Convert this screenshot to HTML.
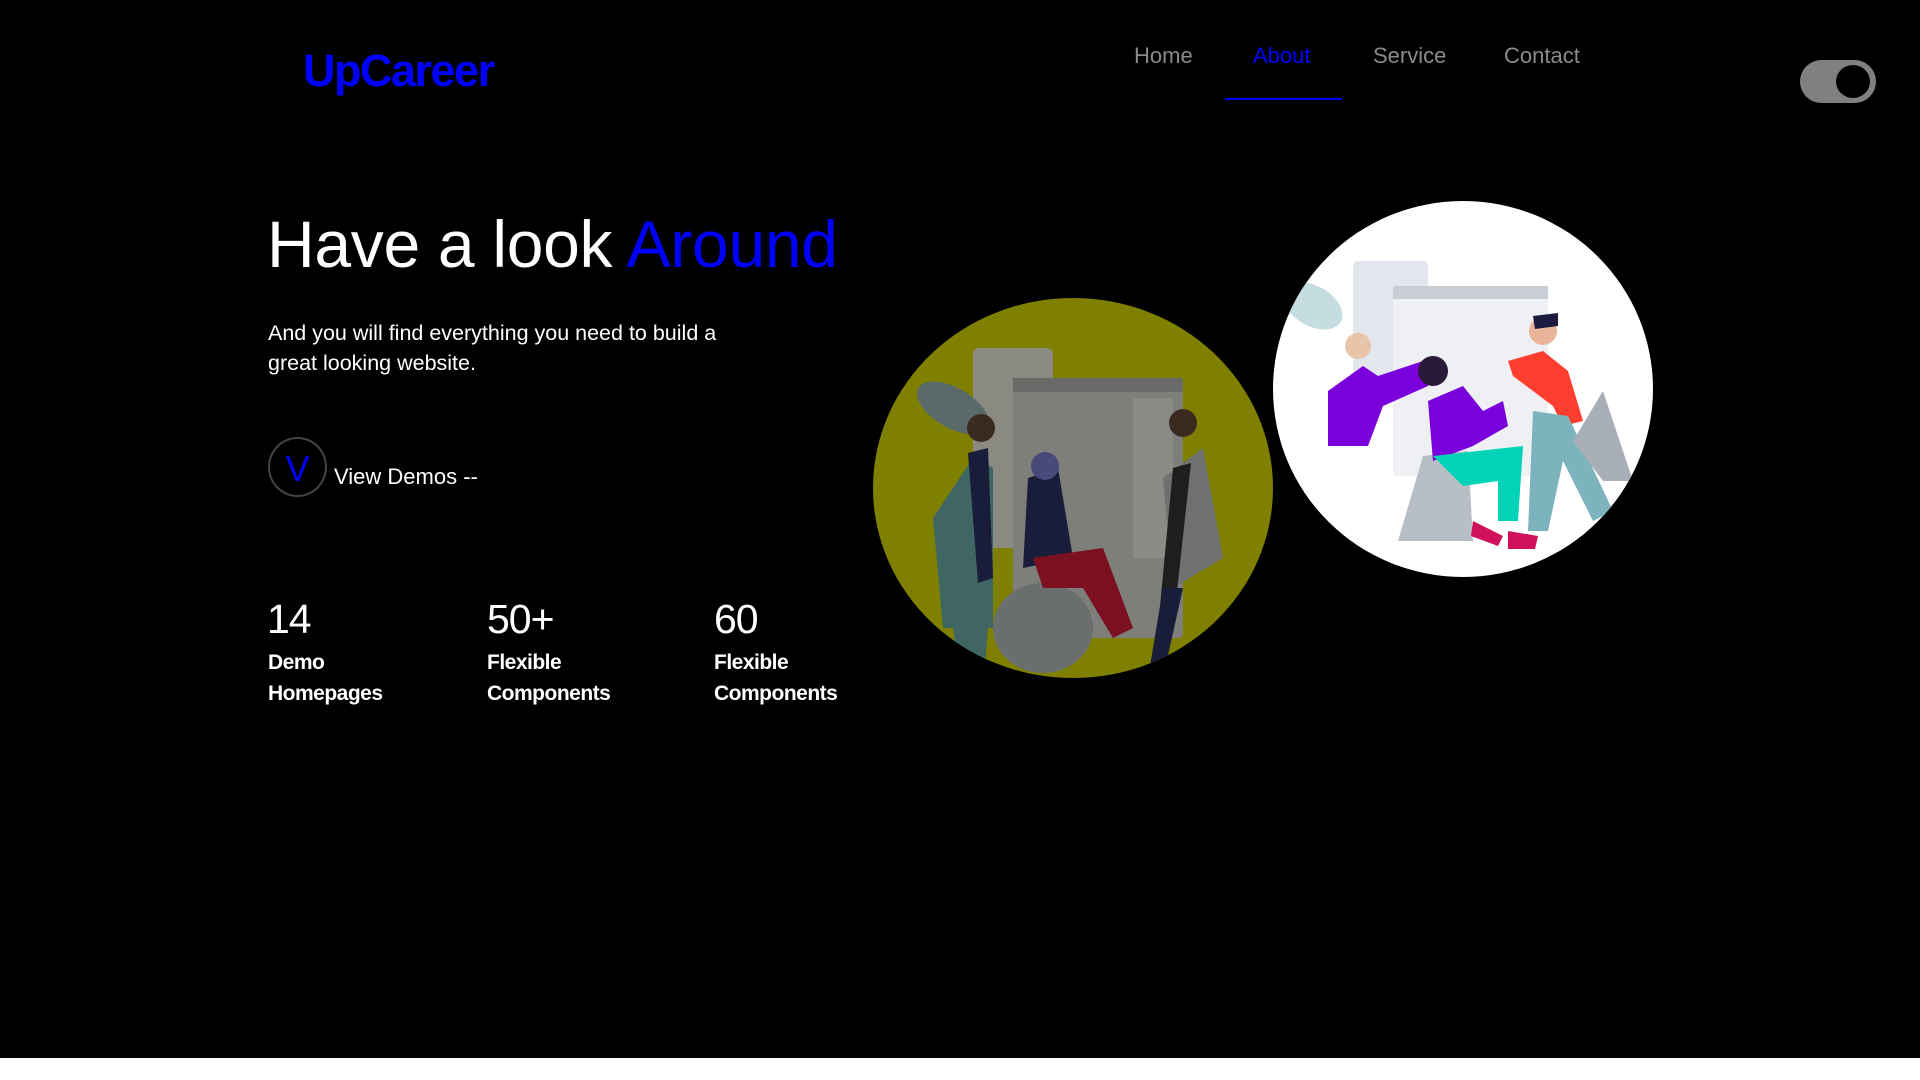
<!DOCTYPE html>
<html><head><meta charset="utf-8"><style>
*{margin:0;padding:0;box-sizing:border-box}
body{width:1920px;height:1080px;background:#fff;font-family:"Liberation Sans",sans-serif;overflow:hidden;position:relative}
.bg{position:absolute;left:0;top:0;width:1920px;height:1058px;background:#000}
.a{position:absolute;white-space:nowrap}
.logo{left:303px;top:45px;font-size:45px;font-weight:bold;color:#0000ff;letter-spacing:-1.5px}
.nav{top:43px;font-size:22px;color:#8a8a8a}
.stat{font-size:41px;color:#fff;letter-spacing:-1px}
.lbl{font-size:21px;color:#fff;font-weight:bold;line-height:31px;letter-spacing:-0.5px}
</style></head><body>
<div class="bg"></div>
<div class="a logo">UpCareer</div>
<div class="a nav" style="left:1134px">Home</div>
<div class="a nav" style="left:1253px;color:#0000ff">About</div>
<div class="a nav" style="left:1373px">Service</div>
<div class="a nav" style="left:1504px">Contact</div>
<div class="a" style="left:1225px;top:98px;width:117px;height:2px;background:#0000ff"></div>
<div class="a" style="left:1800px;top:60px;width:76px;height:43px;border-radius:22px;background:#808080"></div>
<div class="a" style="left:1834px;top:63px;width:38px;height:37px;border-radius:50%;background:#000;border:2px solid #808080"></div>
<div class="a" style="left:267px;top:206px;font-size:66px;color:#fff;letter-spacing:-0.3px">Have a look <span style="color:#0000ff">Around</span></div>
<div class="a" style="left:268px;top:318px;font-size:21.5px;color:#fff;line-height:30px">And you will find everything you need to build a<br>great looking website.</div>
<div class="a" style="left:268px;top:437px;width:59px;height:60px;border-radius:50%;border:2px solid #444"></div>
<div class="a" style="left:268px;top:448px;width:59px;text-align:center;font-size:36px;color:#0000ff">V</div>
<div class="a" style="left:334px;top:464px;font-size:22px;color:#fff">View Demos --</div>
<div class="a stat" style="left:267px;top:596px">14</div>
<div class="a stat" style="left:487px;top:596px">50+</div>
<div class="a stat" style="left:714px;top:596px">60</div>
<div class="a lbl" style="left:268px;top:647px">Demo<br>Homepages</div>
<div class="a lbl" style="left:487px;top:647px">Flexible<br>Components</div>
<div class="a lbl" style="left:714px;top:647px">Flexible<br>Components</div>
<svg class="a" style="left:873px;top:298px" width="400" height="380" viewBox="0 0 400 380">
<defs><clipPath id="c1"><ellipse cx="200" cy="190" rx="200" ry="190"/></clipPath></defs>
<g clip-path="url(#c1)">
<rect width="400" height="380" fill="#808000"/>
<rect x="100" y="50" width="80" height="200" rx="6" fill="#8a8a82"/>
<rect x="140" y="80" width="170" height="260" rx="4" fill="#7e7e7a"/>
<rect x="140" y="80" width="170" height="14" fill="#6a6a68"/>
<rect x="260" y="100" width="40" height="160" fill="#8a8a86"/>
<ellipse cx="80" cy="110" rx="40" ry="20" fill="#5a6a6a" transform="rotate(30 80 110)"/>
<path d="M60 220 L100 160 L120 170 L120 330 L70 330 Z" fill="#3f6662"/>
<path d="M95 155 L115 150 L120 280 L105 285 Z" fill="#1a1d3a"/>
<circle cx="108" cy="130" r="14" fill="#3a2a20"/>
<path d="M80 330 L90 400 L110 400 L115 330 Z" fill="#3f6662"/>
<ellipse cx="170" cy="330" rx="50" ry="45" fill="#6b6e6e"/>
<path d="M155 180 L185 170 L200 260 L150 270 Z" fill="#1a1d3a"/>
<circle cx="172" cy="168" r="14" fill="#4a4a7a"/>
<path d="M160 260 L230 250 L260 330 L240 340 L210 290 L170 290 Z" fill="#7a1020"/>
<path d="M290 180 L330 150 L350 260 L300 290 Z" fill="#6f7170"/>
<path d="M300 170 L318 165 L300 330 L285 330 Z" fill="#1e1e1e"/>
<circle cx="310" cy="125" r="14" fill="#3a2a20"/>
<path d="M290 290 L275 380 L290 380 L310 290 Z" fill="#1a1d3a"/>
</g></svg>
<svg class="a" style="left:1273px;top:201px" width="380" height="377" viewBox="0 0 380 377">
<defs><clipPath id="c2"><ellipse cx="190" cy="188" rx="190" ry="188"/></clipPath></defs>
<g clip-path="url(#c2)">
<rect width="380" height="377" fill="#fff"/>
<rect x="80" y="60" width="75" height="140" rx="5" fill="#e3e6ec"/>
<rect x="120" y="85" width="155" height="190" rx="4" fill="#eef0f3"/>
<rect x="120" y="85" width="155" height="13" fill="#c9ced5"/>
<ellipse cx="40" cy="105" rx="32" ry="20" fill="#c5dde0" transform="rotate(30 40 105)"/>
<path d="M55 190 L90 165 L105 175 L150 160 L155 185 L110 205 L95 245 L55 245 Z" fill="#7a00dc"/>
<circle cx="85" cy="145" r="13" fill="#e8c4a8"/>
<path d="M150 255 L195 250 L200 340 L125 340 Z" fill="#b8bec5"/>
<path d="M155 200 L190 185 L210 210 L230 200 L235 225 L200 245 L160 260 Z" fill="#7a00dc"/>
<path d="M160 255 L250 245 L245 320 L225 320 L225 280 L190 285 Z" fill="#00d3b8"/>
<circle cx="160" cy="170" r="15" fill="#2a1a3a"/>
<path d="M200 320 L230 335 L225 345 L198 335 Z" fill="#d0105a"/>
<path d="M235 330 L265 335 L262 348 L235 348 Z" fill="#d0105a"/>
<path d="M235 160 L270 150 L295 170 L310 220 L290 225 L280 205 L240 175 Z" fill="#ff3e30"/>
<circle cx="270" cy="130" r="14" fill="#e8b59a"/>
<path d="M260 115 L285 112 L285 125 L262 128 Z" fill="#1d1a40"/>
<path d="M260 210 L295 215 L340 310 L320 320 L290 260 L275 330 L255 330 Z" fill="#7db3bc"/>
<path d="M300 240 L330 190 L360 280 L330 280 Z" fill="#a8afb8"/>
</g></svg>
</body></html>
